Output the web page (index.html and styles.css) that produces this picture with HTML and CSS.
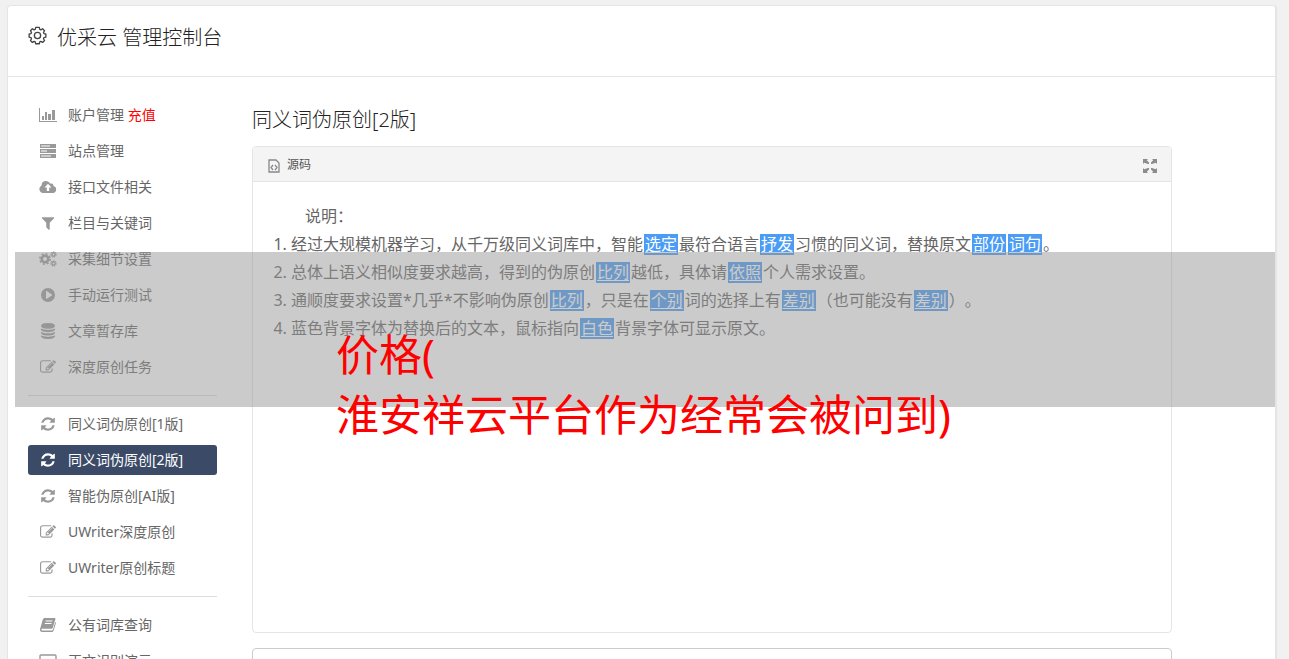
FILE: index.html
```html
<!DOCTYPE html>
<html lang="zh-CN">
<head>
<meta charset="utf-8">
<title>优采云 管理控制台</title>
<link rel="stylesheet" href="styles.css">
</head>
<body>
<svg class="sprite" aria-hidden="true">
  <symbol id="refresh" viewBox="0 0 1792 1792"><path d="M1639 1056q0 5-1 7-64 268-268 434.500t-478 166.500q-146 0-282.500-55t-243.500-157l-129 129q-19 19-45 19t-45-19-19-45v-448q0-26 19-45t45-19h448q26 0 45 19t19 45-19 45l-137 137q71 66 161 102t187 36q134 0 250-65t186-179q11-17 53-117 8-23 30-23h192q13 0 22.500 9.500t9.500 22.500zm25-800v448q0 26-19 45t-45 19h-448q-26 0-45-19t-19-45 19-45l138-138q-148-137-349-137-134 0-250 65t-186 179q-11 17-53 117-8 23-30 23h-199q-13 0-22.500-9.500t-9.500-22.500v-7q65-268 270-434.500t480-166.500q146 0 284 55.500t245 156.500l130-129q19-19 45-19t45 19 19 45z"/></symbol>
  <symbol id="edit" viewBox="0 0 1792 1792"><path d="M888 1184l116-116-152-152-116 116v56h96v96h56zm440-720q-16-16-33 1l-350 350q-17 17-1 33t33-1l350-350q17-17 1-33zm80 594v190q0 119-84.500 203.500t-203.500 84.500h-832q-119 0-203.500-84.500t-84.500-203.500v-832q0-119 84.500-203.500t203.500-84.500h832q63 0 117 25 15 7 18 23 3 17-9 29l-49 49q-14 14-32 8-23-6-45-6h-832q-66 0-113 47t-47 113v832q0 66 47 113t113 47h832q66 0 113-47t47-113v-126q0-13 9-22l64-64q15-15 35-7t20 29zm-96-738l288 288-672 672h-288v-288zm444 132l-92 92-288-288 92-92q28-28 68-28t68 28l152 152q28 28 28 68t-28 68z"/></symbol>
  <symbol id="chart" viewBox="0 0 18 16"><path d="M0 1h1v13h17v1H0zM3 9h2v4H3zM6 5h2v8H6zM9 7h3v6H9zM13 3h3v10h-3z"/></symbol>
  <symbol id="server" viewBox="0 0 18 16"><path fill-rule="evenodd" d="M1 1h16v4H1zM2 2.500v1h9v-1zM1 6h16v4H1zM2 7.500v1h6v-1zM1 11h16v4H1zM2 12.500v1h10v-1z"/></symbol>
  <symbol id="cloud" viewBox="0 0 18 16"><path fill-rule="evenodd" d="M4 14a4 4 0 0 1-1.500-7.500C2.500 3.300 4.500 2 6.800 2c2 0 3.600 1 4.400 2.800 1.800-.9 3.500.4 3.200 2.300A3.500 3.500 0 0 1 14 14zM9 4.700 5.500 8.500h2.300V12h2.400V8.500h2.300z"/></symbol>
  <symbol id="filter" viewBox="0 0 1792 1792"><path d="M1595 295q17 41-14 70l-493 493v742q0 42-39 59-13 5-25 5-27 0-45-19l-256-256q-19-19-19-45v-486l-493-493q-31-29-14-70 17-39 59-39h1280q42 0 59 39z"/></symbol>
  <symbol id="cogs" viewBox="0 0 18 16"><g fill="none" stroke="currentColor"><circle cx="6" cy="8" r="3.300" stroke-width="2.600"/><circle cx="6" cy="8" r="5.200" stroke-width="1.500" stroke-dasharray="2 2.080"/><circle cx="14.500" cy="3.500" r="1.700" stroke-width="1.400"/><circle cx="14.500" cy="3.500" r="2.800" stroke-width="1" stroke-dasharray="1.200 1.300"/><circle cx="14.500" cy="12.500" r="1.700" stroke-width="1.400"/><circle cx="14.500" cy="12.500" r="2.800" stroke-width="1" stroke-dasharray="1.200 1.300"/></g></symbol>
  <symbol id="play" viewBox="0 0 18 16"><path fill-rule="evenodd" d="M9 1a7 7 0 1 0 0 14A7 7 0 0 0 9 1zM7 4.500c0-.5.400-.7.800-.5l5 3.400c.5.300.5.800 0 1.100l-5 3.300c-.4.300-.8 0-.8-.4z"/></symbol>
  <symbol id="database" viewBox="0 0 1792 1792"><path d="M896 768q237 0 443-43t325-127v170q0 69-103 128t-280 93.500-385 34.500-385-34.500-280-93.500-103-128v-170q119 84 325 127t443 43zm0 768q237 0 443-43t325-127v170q0 69-103 128t-280 93.500-385 34.500-385-34.500-280-93.500-103-128v-170q119 84 325 127t443 43zm0-384q237 0 443-43t325-127v170q0 69-103 128t-280 93.500-385 34.500-385-34.500-280-93.500-103-128v-170q119 84 325 127t443 43zm0-1152q208 0 385 34.500t280 93.500 103 128v128q0 69-103 128t-280 93.500-385 34.500-385-34.500-280-93.500-103-128v-128q0-69 103-128t280-93.500 385-34.500z"/></symbol>
  <symbol id="book" viewBox="0 0 18 16"><path fill-rule="evenodd" d="M6 1h9.500c.8 0 1.100.5.900 1.200l-2.600 8.600c-.2.700-.7 1-1.400 1H3c-.8 0-.9 1.700.2 1.700h9.600c.6 0 .9-.2 1.100-.8L16.300 5c.6.300.7.800.5 1.400l-2.300 7.400c-.3.800-.8 1.200-1.600 1.200H3.200c-1.700 0-2.700-1.700-2.100-3.200l2.700-9.200C4.200 1.500 4.800 1 6 1zm.8 2.500-.3 1h6.700l.3-1zM6 6l-.3 1h6.700l.3-1z"/></symbol>
  <symbol id="screen" viewBox="0 0 18 16"><rect x="1" y="2" width="16" height="11" rx="1" fill="none" stroke="currentColor" stroke-width="1.400"/><path d="M5 15h8v1H5z"/></symbol>
</svg>
<div class="console">
  <header class="console-header">
    <svg class="gear" viewBox="0 0 20 20" aria-hidden="true"><g fill="none" stroke="currentColor" stroke-width="1.400" stroke-linejoin="round"><circle cx="10" cy="10" r="3.300"/><path d="M8.100 1.500h3.800l.5 2 1.100.5 1.900-1.100 2 2-1.100 1.900.5 1.200 2 .4v3.400l-2 .4-.5 1.200 1.100 1.900-2 2-1.900-1.100-1.100.5-.5 2H8.100l-.5-2-1.100-.5-1.900 1.100-2-2 1.100-1.900-.5-1.200-2-.4V8.400l2-.4.500-1.200-1.100-1.900 2-2L6.500 4l1.100-.5z"/></g></svg>
    <h1 class="brand">优采云 管理控制台</h1>
  </header>
  <div class="layout">
    <nav class="menu">
      <a class="item" href="#"><svg class="icon"><use href="#chart"/></svg><span>账户管理 <span class="recharge">充值</span></span></a>
      <a class="item" href="#"><svg class="icon"><use href="#server"/></svg>站点管理</a>
      <a class="item" href="#"><svg class="icon"><use href="#cloud"/></svg>接口文件相关</a>
      <a class="item" href="#"><svg class="icon"><use href="#filter"/></svg>栏目与关键词</a>
      <a class="item" href="#"><svg class="icon"><use href="#cogs"/></svg>采集细节设置</a>
      <a class="item" href="#"><svg class="icon"><use href="#play"/></svg>手动运行测试</a>
      <a class="item" href="#"><svg class="icon"><use href="#database"/></svg>文章暂存库</a>
      <a class="item" href="#"><svg class="icon"><use href="#edit"/></svg>深度原创任务</a>
      <hr class="divider">
      <a class="item" href="#"><svg class="icon"><use href="#refresh"/></svg>同义词伪原创[1版]</a>
      <a class="item active" href="#" aria-current="page"><svg class="icon"><use href="#refresh"/></svg>同义词伪原创[2版]</a>
      <a class="item" href="#"><svg class="icon"><use href="#refresh"/></svg>智能伪原创[AI版]</a>
      <a class="item" href="#"><svg class="icon"><use href="#edit"/></svg>UWriter深度原创</a>
      <a class="item" href="#"><svg class="icon"><use href="#edit"/></svg>UWriter原创标题</a>
      <hr class="divider">
      <a class="item" href="#"><svg class="icon"><use href="#book"/></svg>公有词库查询</a>
      <a class="item" href="#"><svg class="icon"><use href="#screen"/></svg>正文识别演示</a>
    </nav>
    <main class="content">
      <h2 class="page-title">同义词伪原创[2版]</h2>
      <section class="editor">
        <div class="toolbar">
          <button class="tool" type="button"><svg class="source-icon" viewBox="0 0 12 14" aria-hidden="true"><path fill="none" stroke="currentColor" stroke-width="1.300" d="M1 1h7l3 3v9H1zM5 6 3 8.500 5 11M7 6l2 2.500L7 11"/></svg>源码</button>
          <button class="tool expand" type="button" aria-label="全屏"><svg class="expand-icon" viewBox="0 0 14 14" aria-hidden="true"><path d="M0 0h5L3.800 1.200 6 3.500V5H5L1.200 3.800 0 5zM14 0v5l-1.200-1.200L9 5H8V3.500l2.200-2.300L9 0zM0 14V9l1.200 1.200L5 9h1v1.500l-2.200 2.300L5 14zM14 14H9l1.200-1.200L8 10.500V9h1l3.800 1.200L14 9z"/></svg></button>
        </div>
        <div class="document">
          <p class="intro">说明：</p>
          <ol class="notes">
            <li>经过大规模机器学习，从千万级同义词库中，智能<u>选定</u>最符合语言<u>抒发</u>习惯的同义词，替换原文<u>部份</u><u>词句</u>。</li>
            <li>总体上语义相似度要求越高，得到的伪原创<u>比列</u>越低，具体请<u>依照</u>个人需求设置。</li>
            <li>通顺度要求设置*几乎*不影响伪原创<u>比列</u>，只是在<u>个别</u>词的选择上有<u>差别</u>（也可能没有<u>差别</u>）。</li>
            <li>蓝色背景字体为替换后的文本，鼠标指向<u>白色</u>背景字体可显示原文。</li>
          </ol>
        </div>
      </section>
      <section class="output"></section>
    </main>
  </div>
</div>
<div class="band"></div>
<p class="caption">价格(<br>淮安祥云平台作为经常会被问到)</p>
</body>
</html>
```

FILE: styles.css
```css
* { box-sizing: border-box; }

body {
  margin: 0;
  height: 100vh;
  overflow: hidden;
  padding: 5px 12px 0 7px;
  background: #f1f1f1;
  color: #666;
  font: 14px/20px "Noto Sans", "Noto Sans CJK SC", sans-serif;
  text-spacing-trim: space-all;
}

.sprite { display: none; }

h1, h2, p, ol { margin: 0; font-weight: 300; }

.console {
  background: #fff;
  border: 1px solid #e5e5e5;
  border-right-width: 2px;
  border-radius: 4px 4px 0 0;
}

.console-header {
  display: flex;
  align-items: flex-start;
  gap: 10px;
  height: 71px;
  padding: 17px 20px;
  border-bottom: 1px solid #e5e5e5;
}

.gear { width: 19px; height: 19px; margin-top: 3px; color: #444; }

.brand, .page-title {
  color: #222;
  font-size: 20px;
  line-height: 30px;
}

.layout {
  display: flex;
  gap: 35px;
  padding: 23px 103px 0 20px;
}

.menu {
  display: flex;
  flex-direction: column;
  flex: 0 0 189px;
  gap: 6px;
}

.item {
  display: flex;
  align-items: center;
  gap: 11px;
  height: 30px;
  padding: 0 11px;
  border-radius: 3px;
  color: #666;
  text-decoration: none;
}

.item.active { background: #3b4b67; color: #fff; }
.icon { flex: none; width: 18px; height: 16px; color: #999; fill: currentColor; }
.active .icon { color: #fff; }
.recharge { color: #f00; }

.divider {
  width: 100%;
  height: 1px;
  margin: 7px 0;
  border: 0;
  background: #ddd;
}

.content { flex: 1; min-width: 0; }
.page-title { margin: 5px 0 11px; }

.editor {
  border: 1px solid #e5e5e5;
  border-radius: 4px;
}

.toolbar {
  display: flex;
  align-items: center;
  justify-content: space-between;
  height: 35px;
  padding: 2px 14px 0 15px;
  border-bottom: 1px solid #e5e5e5;
  border-radius: 4px 4px 0 0;
  background: #f4f4f4;
}

.tool {
  display: flex;
  align-items: center;
  gap: 7px;
  padding: 0;
  border: 0;
  background: none;
  color: #555;
  font: 12px/18px "Noto Sans", "Noto Sans CJK SC", sans-serif;
}

.source-icon { width: 12px; height: 14px; margin-top: 2px; color: #888; }
.expand-icon { width: 14px; height: 14px; margin-top: 2px; fill: #8c8c8c; }

.document {
  min-height: 450px;
  padding: 20px;
  font-size: 16px;
  line-height: 28px;
}

.intro { text-indent: 32px; font-weight: 400; }
.notes { padding-left: 18px; font-weight: 400; }

.notes u {
  display: inline-block;
  margin: 0 1px;
  padding: 0 1px;
  background: #4a9cf5;
  color: #fff;
  line-height: 21px;
  text-underline-offset: 2px;
}

.output {
  height: 200px;
  margin-top: 15px;
  border: 1px solid #ccc;
  border-radius: 4px;
}

.band {
  position: absolute;
  top: 252px;
  right: 14px;
  left: 15px;
  height: 155px;
  background: rgba(149, 149, 149, .49);
}

.caption {
  position: absolute;
  top: 325px;
  left: 336px;
  color: #f00;
  font-size: 43px;
  font-weight: 400;
  line-height: 60px;
}
```
